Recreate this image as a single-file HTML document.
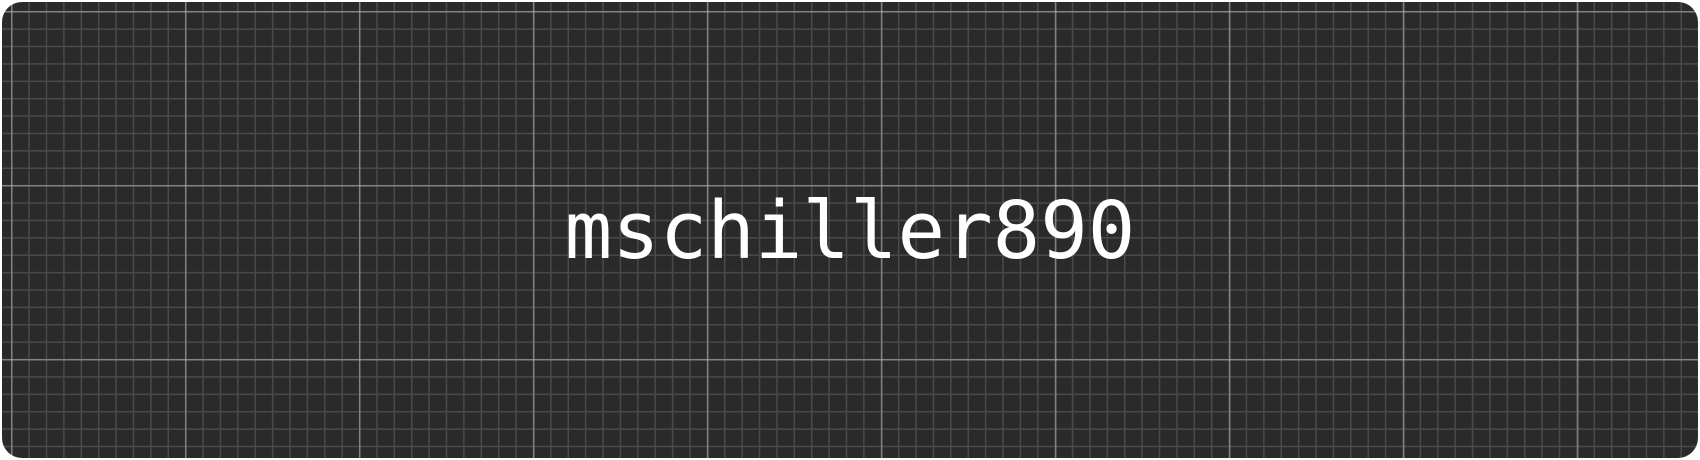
<!DOCTYPE html>
<html><head><style>
html,body{margin:0;padding:0;background:#fff;width:1700px;height:460px;overflow:hidden}
.card{position:absolute;left:2px;top:2px;width:1696px;height:456px;border-radius:20px;background-color:#2a2a2a;
background-image:
linear-gradient(to right, rgba(200,200,200,0.45) 0, rgba(200,200,200,0.45) 1.5px, transparent 1.5px),
linear-gradient(to bottom, rgba(200,200,200,0.45) 0, rgba(200,200,200,0.45) 1.5px, transparent 1.5px),
linear-gradient(to right, #4a4a4a 0, #4a4a4a 1.5px, transparent 1.5px),
linear-gradient(to bottom, #4a4a4a 0, #4a4a4a 1.5px, transparent 1.5px);
background-size:174px 174px,174px 174px,17.4px 17.4px,17.4px 17.4px;
background-position:9px 9px,9px 9px,9px 9px,9px 9px;}
.t{position:absolute;left:0;width:1700px;text-align:center;font-family:"DejaVu Sans Mono",monospace;font-size:79px;color:#fff;line-height:1;top:192px}
</style></head><body>
<div class="card"></div>
<div class="t">mschiller890</div>
</body></html>
